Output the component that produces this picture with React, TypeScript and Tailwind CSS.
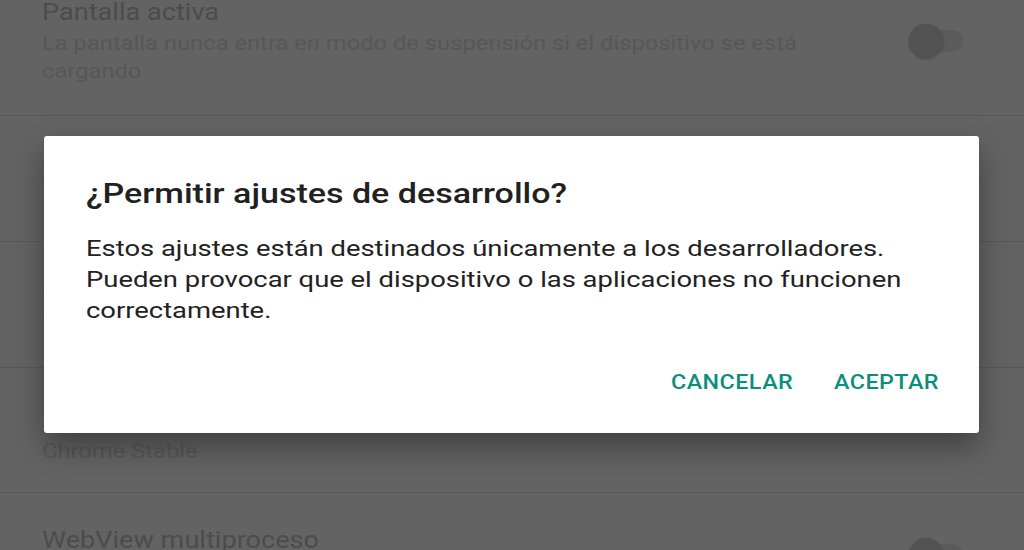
import React from "react"

type Row = {
  title: string
  subtitle?: React.ReactNode
  toggle?: boolean
  className: string
}

function Toggle() {
  return (
    <div className="relative w-[54px] h-[34px] shrink-0">
      <div className="absolute left-[3px] right-0 top-[6px] h-[22px] rounded-full bg-[#5b5b5b]" />
      <div className="absolute left-0 top-0 w-[34px] h-[34px] rounded-full bg-[#525252] shadow-[0_1px_3px_rgba(0,0,0,0.25)]" />
    </div>
  )
}

export default function App() {
  const rows: Row[] = [
    {
      title: "Pantalla activa",
      subtitle: (
        <>
          La pantalla nunca entra en modo de suspensión si el dispositivo se está
          <br />
          cargando
        </>
      ),
      toggle: true,
      className: "h-[150px] -mt-[34px]",
    },
    {
      title: "Desbloqueo de OEM",
      subtitle: "Permitir desbloquear el bootloader",
      toggle: true,
      className: "h-[126px]",
    },
    {
      title: "Servicios en ejecución",
      subtitle: "Ver y controlar servicios en ejecución",
      className: "h-[126px]",
    },
    {
      title: "Implementación de WebView",
      subtitle: "Chrome Stable",
      className: "h-[125px] pt-[10px]",
    },
    {
      title: "WebView multiproceso",
      subtitle: "Ejecutar los renderizadores de WebView en un proceso aislado",
      toggle: true,
      className: "h-[125px]",
    },
  ]

  return (
    <div
      className="relative w-[1024px] h-[550px] overflow-hidden bg-[#636363]"
      style={{ fontFamily: "Roboto, 'Noto Sans', sans-serif" }}
    >
      {/* settings list, dimmed behind the dialog */}
      <div className="flex flex-col">
        {rows.map((row, i) => (
          <div
            key={i}
            className={`flex items-center justify-between pl-[42px] pr-[61px] border-b border-[#585858] shrink-0 ${row.className}`}
          >
            <div className="flex flex-col origin-left scale-x-[1.13]">
              <div className="text-[24px] leading-[30px] text-[#4c4c4c] whitespace-nowrap">{row.title}</div>
              {row.subtitle && (
                <div className="text-[21px] leading-[28px] mt-[2px] text-[#575757] whitespace-nowrap">{row.subtitle}</div>
              )}
            </div>
            {row.toggle && <Toggle />}
          </div>
        ))}
      </div>

      {/* dialog */}
      <div className="absolute left-[44px] top-[136px] w-[935px] h-[297px] bg-white rounded-[3px] shadow-[0_14px_30px_rgba(0,0,0,0.35)] pl-[42px] pr-[40px] pt-[40px] flex flex-col">
        <h2 className="origin-left scale-x-[1.215] whitespace-nowrap text-[28px] leading-[36px] font-medium text-[#212121]">
          ¿Permitir ajustes de desarrollo?
        </h2>
        <p className="origin-left scale-x-[1.245] whitespace-nowrap mt-[21px] text-[22px] leading-[31px] text-[#222222]">
          Estos ajustes están destinados únicamente a los desarrolladores.
          <br />
          Pueden provocar que el dispositivo o las aplicaciones no funcionen
          <br />
          correctamente.
        </p>
        <div className="mt-[44px] flex justify-end gap-[35px] origin-right scale-x-[1.165]">
          <button className="text-[20px] leading-[24px] font-medium tracking-[0.4px] text-[#0b8f7d]">CANCELAR</button>
          <button className="text-[20px] leading-[24px] font-medium tracking-[0.4px] text-[#0b8f7d]">ACEPTAR</button>
        </div>
      </div>
    </div>
  )
}
